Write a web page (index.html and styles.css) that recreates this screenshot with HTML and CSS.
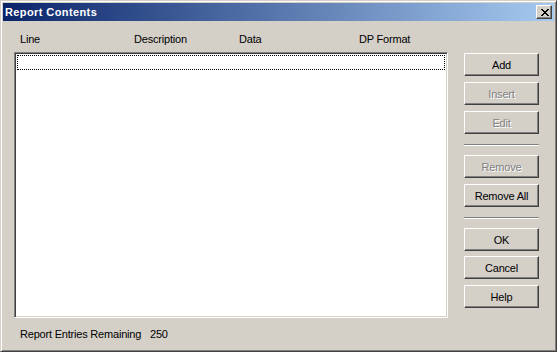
FILE: index.html
```html
<!DOCTYPE html>
<html lang="en">
<head>
    <meta charset="UTF-8">
    <title>Report Contents</title>
    <link rel="stylesheet" href="styles.css">
</head>
<body>
    <div class="window">
        <div class="titlebar">
            <span class="title">Report Contents</span>
            <button class="close" aria-label="Close">
                <svg width="8" height="7" viewBox="0 0 8 7">
                    <path d="M0 0h2v1h-2zM6 0h2v1h-2zM1 1h2v1h-2zM5 1h2v1h-2zM2 2h4v1h-4zM3 3h2v1h-2zM2 4h4v1h-4zM1 5h2v1h-2zM5 5h2v1h-2zM0 6h2v1h-2zM6 6h2v1h-2z" fill="#000"/>
                </svg>
            </button>
        </div>
        <div class="content">
            <div class="main">
                <div class="columns">
                    <span>Line</span>
                    <span>Description</span>
                    <span>Data</span>
                    <span>DP Format</span>
                </div>
                <div class="listbox">
                    <div class="row focused"></div>
                </div>
                <div class="status">
                    <span class="status-label">Report Entries Remaining</span>
                    <span class="status-count">250</span>
                </div>
            </div>
            <div class="buttons">
                <button class="btn">Add</button>
                <button class="btn gap" disabled>Insert</button>
                <button class="btn gap" disabled>Edit</button>
                <div class="separator"></div>
                <button class="btn after-sep" disabled>Remove</button>
                <button class="btn gap">Remove All</button>
                <div class="separator"></div>
                <button class="btn after-sep">OK</button>
                <button class="btn gap-small">Cancel</button>
                <button class="btn gap">Help</button>
            </div>
        </div>
    </div>
</body>
</html>
```

FILE: styles.css
```css
body {
    margin: 0;
    background: #d4d0c8;
    font-family: 'Liberation Sans', Arial, sans-serif;
    font-size: 11px;
    letter-spacing: -0.2px;
    color: #000;
}
.window {
    box-sizing: border-box;
    width: 557px;
    height: 352px;
    padding: 2px;
    background: #d4d0c8;
    border: 1px solid;
    border-color: #d4d0c8 #404040 #404040 #d4d0c8;
    box-shadow: inset 1px 1px #fff, inset -1px -1px #808080;
}
.titlebar {
    height: 18px;
    display: flex;
    align-items: center;
    justify-content: space-between;
    padding: 0 2px;
    background: linear-gradient(90deg, #0a246a, #a6caf0);
}
.title {
    color: #fff;
    font-weight: bold;
    letter-spacing: 0.4px;
    line-height: 13px;
}
.close {
    box-sizing: border-box;
    width: 16px;
    height: 14px;
    padding: 0 0 0 1px;
    margin: 0;
    display: flex;
    align-items: center;
    justify-content: center;
    background: #d4d0c8;
    border: 1px solid;
    border-color: #fff #404040 #404040 #fff;
    box-shadow: inset -1px -1px #808080;
}
.content {
    display: flex;
    height: 328px;
}
.main {
    margin-left: 11px;
    width: 434px;
    padding-top: 12px;
}
.columns {
    display: grid;
    grid-template-columns: 114px 105px 120px auto;
    padding-left: 6px;
    line-height: 13px;
    margin-bottom: 6px;
}
.listbox {
    box-sizing: border-box;
    height: 266px;
    background: #fff;
    border: 1px solid;
    border-color: #808080 #fff #fff #808080;
    box-shadow: inset 1px 1px #404040, inset -1px -1px #d4d0c8;
    padding: 2px;
}
.row {
    height: 13px;
}
.row.focused {
    border: 1px dotted #000;
}
.status {
    margin-top: 10px;
    padding-left: 6px;
    line-height: 13px;
    display: flex;
}
.status-label {
    width: 130px;
}
.buttons {
    margin-left: 16px;
    margin-top: 32px;
    display: flex;
    flex-direction: column;
    width: 75px;
}
.btn {
    box-sizing: border-box;
    width: 75px;
    height: 23px;
    margin: 0;
    padding: 1px 0 0;
    font-family: inherit;
    font-size: 11px;
    font-weight: 400;
    letter-spacing: -0.2px;
    color: #000;
    background: #d4d0c8;
    border: 1px solid;
    border-color: #fff #404040 #404040 #fff;
    box-shadow: inset -1px -1px #808080;
}
.btn:disabled {
    color: #808080;
    text-shadow: 1px 1px #fff;
}
.gap {
    margin-top: 6px;
}
.gap-small {
    margin-top: 5px;
}
.separator {
    margin-top: 10px;
    height: 0;
    border-top: 1px solid #808080;
    border-bottom: 1px solid #fff;
}
.after-sep {
    margin-top: 9px;
}
```
